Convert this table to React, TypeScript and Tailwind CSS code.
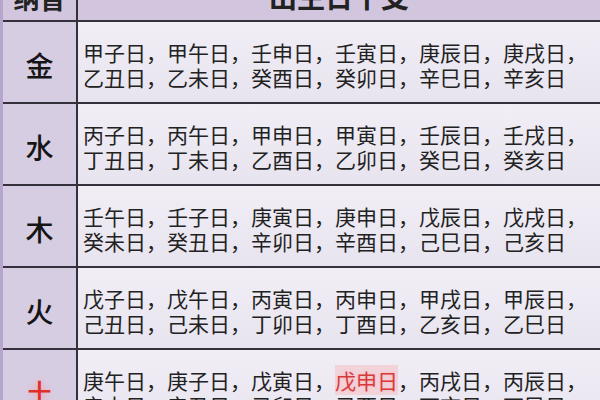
const rows = [
  {
    name: "金",
    lines: [
      ["甲子日", "甲午日", "壬申日", "壬寅日", "庚辰日", "庚戌日"],
      ["乙丑日", "乙未日", "癸酉日", "癸卯日", "辛巳日", "辛亥日"],
    ],
  },
  {
    name: "水",
    lines: [
      ["丙子日", "丙午日", "甲申日", "甲寅日", "壬辰日", "壬戌日"],
      ["丁丑日", "丁未日", "乙酉日", "乙卯日", "癸巳日", "癸亥日"],
    ],
  },
  {
    name: "木",
    lines: [
      ["壬午日", "壬子日", "庚寅日", "庚申日", "戊辰日", "戊戌日"],
      ["癸未日", "癸丑日", "辛卯日", "辛酉日", "己巳日", "己亥日"],
    ],
  },
  {
    name: "火",
    lines: [
      ["戊子日", "戊午日", "丙寅日", "丙申日", "甲戌日", "甲辰日"],
      ["己丑日", "己未日", "丁卯日", "丁酉日", "乙亥日", "乙巳日"],
    ],
  },
  {
    name: "土",
    red: true,
    lines: [
      ["庚午日", "庚子日", "戊寅日", "戊申日", "丙戌日", "丙辰日"],
      ["辛未日", "辛丑日", "己卯日", "己酉日", "丁亥日", "丁巳日"],
    ],
  },
];

const font = { fontFamily: '"Noto Sans CJK SC", "Noto Sans", sans-serif' };

function Line({ days, last, hot }: { days: string[]; last: boolean; hot?: boolean }) {
  return (
    <div className="whitespace-nowrap">
      {days.map((d, i) => {
        const isHot = hot && d === "戊申日";
        return (
          <span key={i}>
            <span
              className={isHot ? "text-[#d83a3a] bg-[#f2d3da] [text-shadow:0_0_3px_#f7b5c0]" : ""}
            >
              {d}
            </span>
            {i < days.length - 1 || !last ? "，" : ""}
          </span>
        );
      })}
    </div>
  );
}

export default function App() {
  return (
    <div className="w-[600px] h-[400px] overflow-hidden bg-[#ebe7f1] text-[#222]" style={font}>
      <div className="border-l-[3px] border-[#b7a6cc]">
        {/* header, top is cut off */}
        <div className="flex h-[22px] border-b-2 border-[#34303c] overflow-hidden bg-[#d2c6df]">
          <div className="w-[75px] shrink-0 border-r-2 border-[#34303c] flex justify-center">
            <div className="-mt-[22px] text-[26px] font-bold leading-[40px]">纳音</div>
          </div>
          <div className="flex-1 flex justify-center">
            <div className="-mt-[24px] text-[28px] font-bold leading-[40px]">出生日干支</div>
          </div>
        </div>
        {rows.map((r) => (
          <div key={r.name} className="flex h-[82px] border-b-2 border-[#34303c]">
            <div className="w-[75px] shrink-0 border-r-2 border-[#34303c] bg-[#d7cde3] flex items-center justify-center pt-[6px]">
              <span
                className={
                  r.red
                    ? "text-[28px] font-medium text-[#e0302c] [text-shadow:0_0_6px_#f4a0a8]"
                    : "text-[28px] font-medium text-[#151515]"
                }
              >
                {r.name}
              </span>
            </div>
            <div className="flex-1 flex flex-col justify-center pl-[5px] pt-[5px] text-[21px] leading-[25px] bg-gradient-to-b from-[#f1eef6] to-[#e8e4ef]">
              {r.lines.map((l, i) => (
                <Line key={i} days={l} last={i === r.lines.length - 1} hot={r.red} />
              ))}
            </div>
          </div>
        ))}
      </div>
    </div>
  );
}
